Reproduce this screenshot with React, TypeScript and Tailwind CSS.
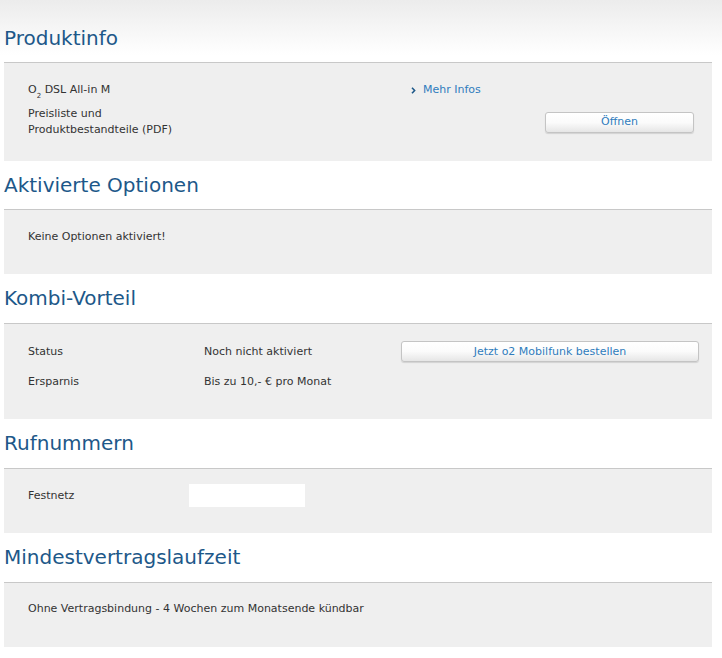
import React from 'react';

const body = "font-['DejaVu_Sans',Verdana,sans-serif]";

function SectionTitle({ title, first, tall }: { title: string; first?: boolean; tall?: boolean }) {
  return (
    <h2
      className={`${first ? 'pt-[26px]' : 'pt-3'} ${tall ? 'pb-[13px]' : 'pb-3'} pl-1 text-[20px] leading-6 text-[#1d5889] font-normal`}
    >
      {title}
    </h2>
  );
}

function Box({ className, children }: { className: string; children: React.ReactNode }) {
  return (
    <div className={`ml-1 w-[708px] border-t border-[#c8c8c8] bg-[#efefef] pl-6 text-[11px] leading-4 text-[#333333] ${className}`}>
      {children}
    </div>
  );
}

function GrayButton({ label, className }: { label: string; className: string }) {
  return (
    <button
      className={`h-[21px] rounded-[3px] border border-[#c4c4c4] bg-gradient-to-b from-white via-[#fbfbfb] to-[#e6e6e6] text-[11px] leading-4 text-[#2f7cbd] shadow-[0_1px_1px_rgba(0,0,0,0.12)] ${className}`}
    >
      {label}
    </button>
  );
}

export default function App() {
  return (
    <div className={`min-h-[658px] w-[722px] bg-[linear-gradient(to_bottom,#ececec,#ffffff_55px)] ${body}`}>
      <SectionTitle title="Produktinfo" first />
      <Box className="pt-[19px] pb-[23px]">
        <div className="flex h-4 items-center">
          <span className="w-[383px]">
            O<sub className="text-[7px] align-[-3px]">2</sub> DSL All-in M
          </span>
          <a className="flex items-center gap-[7px] text-[#2f7cbd]">
            <svg width="5" height="7" viewBox="0 0 5 7">
              <path d="M1 0.8 L3.6 3.5 L1 6.2" fill="none" stroke="#1d5889" strokeWidth="1.6" />
            </svg>
            Mehr Infos
          </a>
        </div>
        <div className="mt-2 flex items-center">
          <span className="w-[517px]">
            Preisliste und
            <br />
            Produktbestandteile (PDF)
          </span>
          <GrayButton label="Öffnen" className="w-[149px]" />
        </div>
      </Box>

      <SectionTitle title="Aktivierte Optionen" />
      <Box className="pt-[19px] pb-[29px]">
        <p>Keine Optionen aktiviert!</p>
      </Box>

      <SectionTitle title="Kombi-Vorteil" tall />
      <Box className="pt-[17px] pb-[29px]">
        <div className="flex h-[21px] items-center">
          <span className="w-[176px]">Status</span>
          <span className="w-[197px]">Noch nicht aktiviert</span>
          <GrayButton label="Jetzt o2 Mobilfunk bestellen" className="w-[298px]" />
        </div>
        <div className="mt-3 flex h-4 items-center">
          <span className="w-[176px]">Ersparnis</span>
          <span>Bis zu 10,- € pro Monat</span>
        </div>
      </Box>

      <SectionTitle title="Rufnummern" tall />
      <Box className="pt-[15px] pb-[26px]">
        <div className="flex h-[23px] items-center">
          <span className="w-[161px]">Festnetz</span>
          <div className="h-[23px] w-[116px] bg-white" />
        </div>
      </Box>

      <SectionTitle title="Mindestvertragslaufzeit" tall />
      <Box className="pt-[18px] pb-[30px]">
        <p>Ohne Vertragsbindung - 4 Wochen zum Monatsende kündbar</p>
      </Box>
    </div>
  );
}
